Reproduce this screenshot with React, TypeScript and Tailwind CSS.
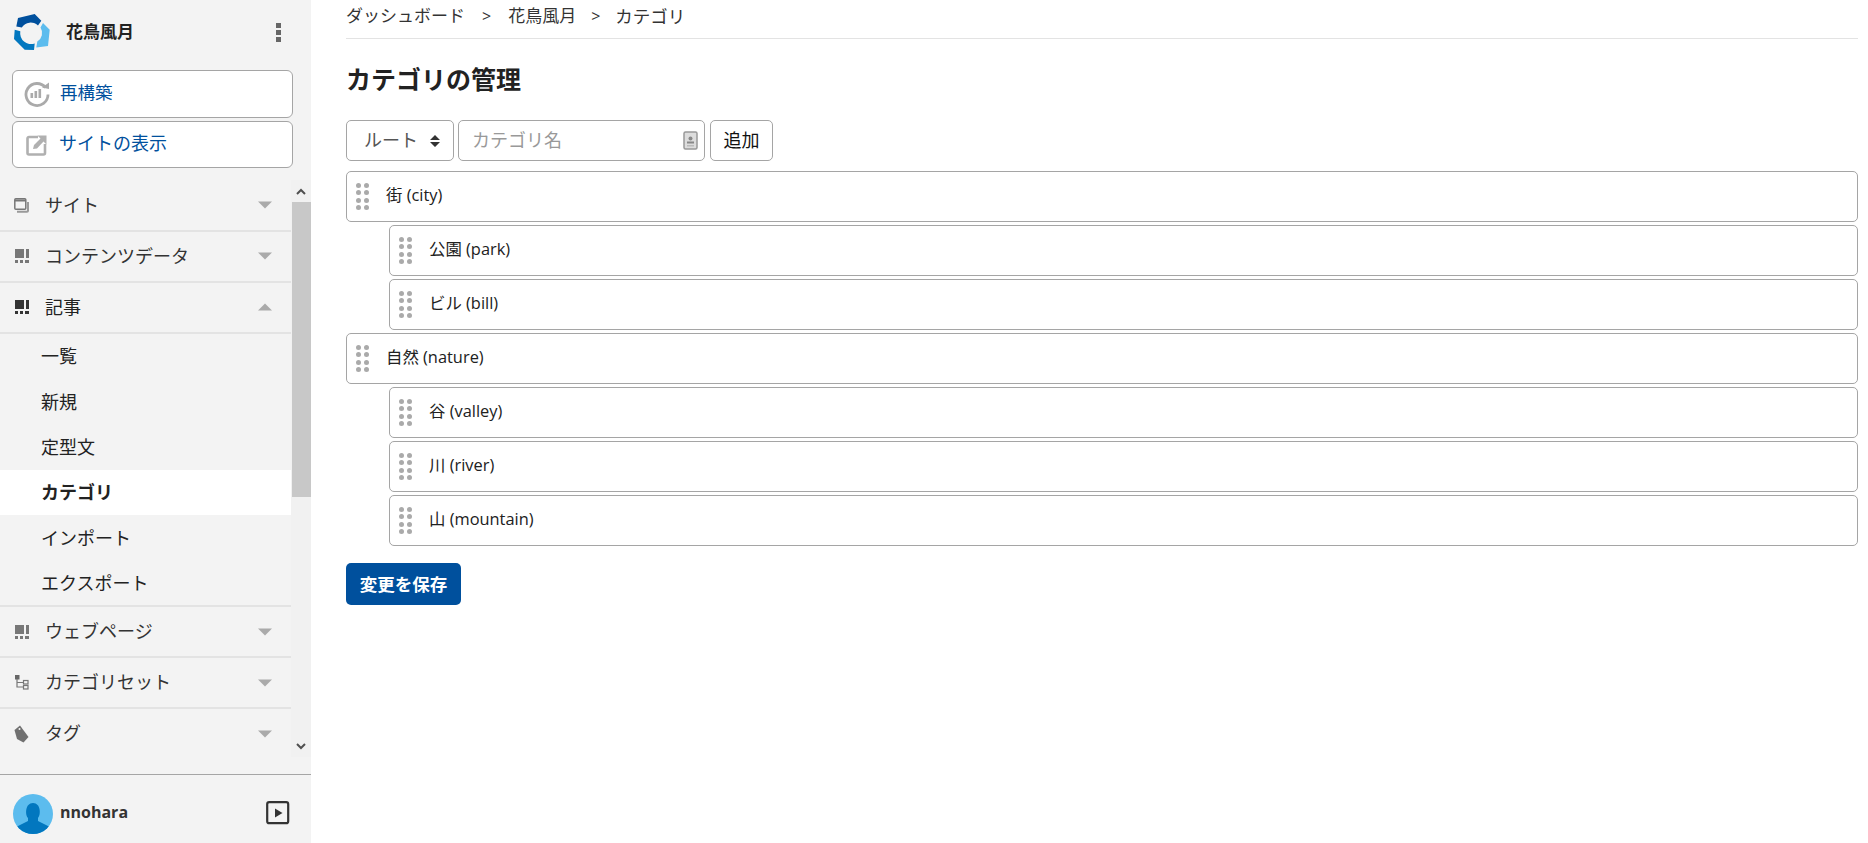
import React from "react";

const font = "font-['Open_Sans','Noto_Sans_CJK_JP',sans-serif]";

const Caret = ({ up }: { up?: boolean }) => (
  <svg width="14" height="8" viewBox="0 0 14 8" className="shrink-0">
    <path d={up ? "M0 7.5 L7 0.5 L14 7.5Z" : "M0 0.5 L14 0.5 L7 7.5Z"} fill="#aaa" />
  </svg>
);

const GridIcon = ({ dark }: { dark?: boolean }) => (
  <svg width="14" height="14" viewBox="0 0 14 14" fill={dark ? "#333" : "#777"}>
    <rect x="0" y="0" width="9" height="9" />
    <rect x="11" y="0" width="3" height="9" />
    <rect x="0" y="11" width="3" height="3" />
    <rect x="5" y="11" width="3" height="3" />
    <rect x="10" y="11" width="4" height="3" />
  </svg>
);

const SiteIcon = () => (
  <svg width="15" height="15" viewBox="0 0 15 15" fill="none" stroke="#777" strokeWidth="1.5">
    <path d="M3 13.8 H13 a1 1 0 0 0 1 -1 V4" strokeWidth="2" stroke="#999" />
    <rect x="0.8" y="0.8" width="11" height="10.5" rx="1" fill="#f3f3f3" />
    <path d="M0.8 2.5 H11.8" strokeWidth="2" />
  </svg>
);

const TreeIcon = () => (
  <svg width="14" height="15" viewBox="0 0 14 15" fill="none" stroke="#777" strokeWidth="1.2">
    <rect x="0" y="0" width="4.5" height="4.5" fill="#666" stroke="none" />
    <path d="M2 4 V12 H8 M2 7.5 H8" />
    <rect x="8.5" y="5.5" width="4.5" height="3.5" />
    <rect x="8.5" y="10.5" width="4.5" height="3.5" />
  </svg>
);

const TagIcon = () => (
  <svg width="15" height="18" viewBox="0 0 15 18">
    <path d="M0.5 5 L6 0.5 L14.5 12 L9.5 17.5 L3 14 Z" fill="#707070" />
    <circle cx="5.5" cy="4" r="1" fill="#f3f3f3" />
  </svg>
);

// three ring segments around a hole at about (17.3,19)
const Logo = () => (
  <svg width="37" height="37" viewBox="0 0 37 37" className="shrink-0">
    <path d="M2.3 12.5 L4 4 L20.7 0 L27.3 6.7 L24 11.5 A10.5 10.5 0 0 0 7.8 13.5 Z" fill="#00509d" />
    <path d="M29 9 L35.7 15.7 L34 32 L22.3 33.5 L23.3 27.5 A10 10 0 0 0 26.5 13.5 Z" fill="#5cbcee" />
    <path d="M0.7 15.7 L6.3 17.3 A11 11 0 0 0 20.7 29.5 L20 36 L10.7 35.7 L0 25 Z" fill="#0277bf" />
  </svg>
);

const RebuildIcon = () => (
  <svg width="26" height="26" viewBox="0 0 26 26" fill="none">
    <path d="M21.5 6.5 A11 11 0 1 0 24 13.5" stroke="#aaa" strokeWidth="2.8" />
    <path d="M18 6.5 L25 8 L25 1.5 Z" fill="#aaa" />
    <rect x="6.5" y="12" width="2.6" height="5" fill="#aaa" />
    <rect x="10.5" y="10" width="2.6" height="7" fill="#aaa" />
    <rect x="14.5" y="8" width="2.6" height="9" fill="#aaa" />
  </svg>
);

const ExternalIcon = () => (
  <svg width="22" height="22" viewBox="0 0 22 22" fill="none">
    <path d="M12 3 H3 a1.5 1.5 0 0 0 -1.5 1.5 V19 a1.5 1.5 0 0 0 1.5 1.5 H17.5 a1.5 1.5 0 0 0 1.5 -1.5 V10" stroke="#b0b0b0" strokeWidth="2.6" />
    <path d="M7 15 L8 11 L14.5 4.5 L11.5 1.5 H20.5 V10.5 L17.5 7.5 L11 14.5 Z" fill="#b0b0b0" />
  </svg>
);

const DragDots = () => (
  <div className="grid grid-cols-[5px_5px] gap-x-[2.5px] gap-y-[2.4px] w-[13px] shrink-0">
    {Array.from({ length: 8 }).map((_, i) => (
      <span key={i} className="w-[5px] h-[5px] rounded-full bg-[#aaa] block" />
    ))}
  </div>
);

const TreeRow = ({ label, nested }: { label: string; nested?: boolean }) => (
  <div className={nested ? "pl-[43px]" : ""}>
    <div className="flex items-center border border-[#a5a5a5] rounded-[5px] pl-[9px] bg-white h-[51px]">
      <DragDots />
      <span className="ml-[17px] text-[16.4px] text-[#212121] -mt-[3px]">{label}</span>
    </div>
  </div>
);

const MenuHead = ({ icon, label, up, dark }: { icon: React.ReactNode; label: string; up?: boolean; dark?: boolean }) => (
  <div className="flex items-center h-[50.9px] border-b-2 border-[#e3e3e3] pl-[14px] pr-[19px] shrink-0">
    <span className="w-[15px] h-[17px] flex items-center justify-center shrink-0">{icon}</span>
    <span className={`ml-[16px] text-[18px] flex-1 ${dark ? "text-[#222]" : "text-[#333]"}`}>{label}</span>
    <Caret up={up} />
  </div>
);

const SubItem = ({ label, active }: { label: string; active?: boolean }) => (
  <div className={`h-[45.3px] flex items-center pl-[41px] text-[18px] text-[#222] ${active ? "bg-white font-bold" : ""}`}>
    <span className="mt-[1px]">{label}</span>
  </div>
);

export default function App() {
  return (
    <div className={`flex h-screen bg-white overflow-hidden ${font}`}>
      <aside className="w-[311px] shrink-0 bg-[#f3f3f3] flex flex-col">
        <div className="h-[70px] shrink-0 flex items-center pl-[14px] pr-[30px] pb-[6px]">
          <Logo />
          <span className="ml-[15px] text-[17px] font-bold text-[#222] flex-1">花鳥風月</span>
          <div className="flex flex-col gap-[2px]">
            <span className="w-[5px] h-[5px] bg-[#666] block" />
            <span className="w-[5px] h-[5px] bg-[#666] block" />
            <span className="w-[5px] h-[5px] bg-[#666] block" />
          </div>
        </div>
        <div className="px-[12px] pr-[18px] flex flex-col gap-[3px] shrink-0">
          <div className="h-[48px] bg-white border border-[#a5a5a5] rounded-[6px] flex items-center pl-[11px] text-[17.5px] text-[#00509d]">
            <RebuildIcon />
            <span className="ml-[10px] -mt-[3px]">再構築</span>
          </div>
          <div className="h-[47px] bg-white border border-[#a5a5a5] rounded-[6px] flex items-center pl-[13px] text-[18px] text-[#00509d]">
            <ExternalIcon />
            <span className="ml-[11px] -mt-[3px]">サイトの表示</span>
          </div>
        </div>
        <div className="mt-[12px] h-[577px] shrink-0 flex">
          <nav className="w-[291px] pt-[1px] overflow-hidden flex flex-col">
            <MenuHead icon={<SiteIcon />} label="サイト" />
            <MenuHead icon={<GridIcon />} label="コンテンツデータ" />
            <MenuHead icon={<GridIcon dark />} label="記事" up dark />
            <div className="border-b-2 border-[#e3e3e3] shrink-0">
              <SubItem label="一覧" />
              <SubItem label="新規" />
              <SubItem label="定型文" />
              <SubItem label="カテゴリ" active />
              <SubItem label="インポート" />
              <SubItem label="エクスポート" />
            </div>
            <MenuHead icon={<GridIcon />} label="ウェブページ" />
            <MenuHead icon={<TreeIcon />} label="カテゴリセット" />
            <div className="flex items-center h-[49px] pl-[14px] pr-[19px] shrink-0">
              <span className="w-[15px] h-[17px] flex items-center justify-center shrink-0"><TagIcon /></span>
              <span className="ml-[16px] text-[18px] flex-1 text-[#333]">タグ</span>
              <Caret />
            </div>
          </nav>
          <div className="w-[20px] bg-[#f1f1f1] flex flex-col items-center">
            <div className="h-[22px] flex items-center justify-center">
              <svg width="10" height="7" viewBox="0 0 10 7" fill="none" stroke="#505050" strokeWidth="2"><path d="M1 6 L5 2 L9 6" /></svg>
            </div>
            <div className="w-[19px] h-[295px] bg-[#c8c8c8]" />
            <div className="flex-1" />
            <div className="h-[22px] flex items-center justify-center">
              <svg width="10" height="7" viewBox="0 0 10 7" fill="none" stroke="#505050" strokeWidth="2"><path d="M1 1 L5 5 L9 1" /></svg>
            </div>
          </div>
        </div>
        <div className="mt-[17px] flex-1 border-t border-[#a5a5a5] flex items-center pl-[13px] pr-[21px] pt-[10px]">
          <svg width="40" height="40" viewBox="0 0 40 40" className="shrink-0">
            <defs>
              <clipPath id="avatar-clip"><circle cx="20" cy="20" r="20" /></clipPath>
            </defs>
            <g clipPath="url(#avatar-clip)">
              <rect width="40" height="40" fill="#5cbcee" />
              <path d="M3 40 V33 L15 27 V24 C12 21 12 9 20 9 C28 9 28 21 25 24 V27 L37 33 V40Z" fill="#0277bf" />
            </g>
          </svg>
          <span className="ml-[7px] text-[16px] font-bold text-[#333] flex-1 -mt-[4px]">nnohara</span>
          <svg width="24" height="24" viewBox="0 0 24 24" fill="none" className="shrink-0 -mt-[2px]">
            <rect x="1.2" y="1.2" width="21" height="21" rx="2" stroke="#333" strokeWidth="2.2" />
            <path d="M9 7.5 L16.5 12 L9 16.5Z" fill="#333" />
          </svg>
        </div>
      </aside>
      <main className="flex-1 pl-[35px] pr-[10px]">
        <div className="h-[39px] border-b border-[#e3e3e3] flex items-center text-[17px] text-[#333] pb-[6px]">
          <span>ダッシュボード</span>
          <span className="mx-[17px] text-[16px]">&gt;</span>
          <span>花鳥風月</span>
          <span className="mx-[15px] text-[16px]">&gt;</span>
          <span className="text-[17.5px]">カテゴリ</span>
        </div>
        <h1 className="mt-[20px] h-[41px] text-[25px] font-bold text-[#222] leading-[40px]">カテゴリの管理</h1>
        <div className="mt-[20px] flex items-stretch h-[41px]">
          <div className="w-[108px] border border-[#a5a5a5] rounded-[5px] flex items-center pl-[17px] text-[18px] text-[#555]">
            <span className="flex-1">ルート</span>
            <svg width="10" height="14" viewBox="0 0 10 14" className="mr-[13px]" fill="#333">
              <path d="M5 1 L10 6 H0Z M5 13 L0 8 H10Z" />
            </svg>
          </div>
          <div className="ml-[4px] w-[247px] border border-[#a5a5a5] rounded-[5px] flex items-center pl-[13px] text-[18px] text-[#999]">
            <span className="flex-1">カテゴリ名</span>
            <svg width="15" height="19" viewBox="0 0 15 19" className="mr-[6px]">
              <rect x="1" y="1" width="13" height="17" rx="1.5" fill="#ddd" stroke="#999" strokeWidth="1.5" />
              <circle cx="7.5" cy="7.5" r="2" fill="#888" />
              <rect x="4" y="10.5" width="7" height="2" fill="#888" />
              <rect x="4" y="14" width="7" height="1.5" fill="#bbb" />
            </svg>
          </div>
          <div className="ml-[5px] w-[63px] border border-[#a5a5a5] rounded-[5px] flex items-center justify-center text-[18px] text-[#111]">
            追加
          </div>
        </div>
        <div className="mt-[10px] flex flex-col gap-[3px]">
          <TreeRow label="街 (city)" />
          <TreeRow label="公園 (park)" nested />
          <TreeRow label="ビル (bill)" nested />
          <TreeRow label="自然 (nature)" />
          <TreeRow label="谷 (valley)" nested />
          <TreeRow label="川 (river)" nested />
          <TreeRow label="山 (mountain)" nested />
        </div>
        <div className="mt-[17px] w-[115px] h-[42px] bg-[#00509d] rounded-[5px] flex items-center justify-center text-white font-bold text-[17.5px]">
          変更を保存
        </div>
      </main>
    </div>
  );
}
